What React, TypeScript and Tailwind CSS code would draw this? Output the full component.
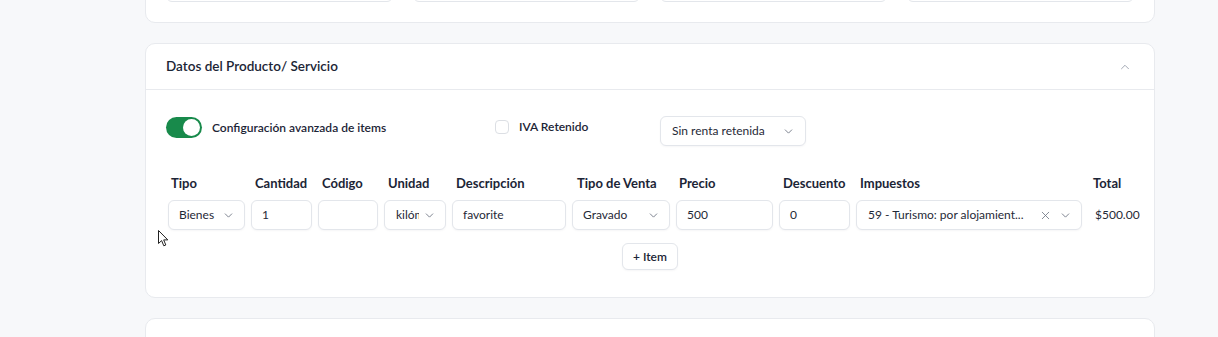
import React from 'react';
import { ChevronDown, ChevronUp, X } from 'lucide-react';

const box =
  'h-[30px] shrink-0 rounded-md border border-[#e3e6eb] bg-white shadow-[0_1px_2px_rgba(16,24,40,0.04)] flex items-center text-[12px] text-[#1f2937]';

function SelectBox({ value, className }: { value: string; className: string }) {
  return (
    <div className={`${box} pl-[10px] pr-[9px] gap-1 ${className}`}>
      <span className="flex-1 overflow-hidden whitespace-nowrap">{value}</span>
      <ChevronDown className="w-[13px] h-[13px] shrink-0 text-[#6b7280]" strokeWidth={1.6} />
    </div>
  );
}

function Field({ value, className }: { value?: string; className: string }) {
  return <div className={`${box} px-[10px] ${className}`}>{value}</div>;
}

function Cursor() {
  return (
    <svg className="absolute left-[12px] top-[186px]" width="11" height="17" viewBox="0 0 11 17">
      <path
        d="M0.5 0.5 L0.5 13.5 L3.6 10.6 L5.8 15.8 L7.8 15 L5.7 9.9 L9.8 9.9 Z"
        fill="#fff"
        stroke="#222"
        strokeWidth="1"
        strokeLinejoin="round"
      />
    </svg>
  );
}

export default function App() {
  return (
    <div className="h-[337px] overflow-hidden bg-[#f7f8fa] font-['Segoe_UI',Lato,'Liberation_Sans',sans-serif] text-[#1f2937]">
      <div className="w-[1010px] ml-[145px] flex flex-col gap-5">
        {/* previous section, mostly scrolled away */}
        <div className="-mt-[55px] rounded-[10px] border border-[#e8eaee] bg-white px-5 py-5">
          <div className="flex gap-5">
            <div className="h-9 w-[228px] rounded-md border border-[#e3e6eb]" />
            <div className="h-9 w-[228px] rounded-md border border-[#e3e6eb]" />
            <div className="h-9 w-[228px] rounded-md border border-[#e3e6eb]" />
            <div className="h-9 w-[228px] rounded-md border border-[#e3e6eb]" />
          </div>
        </div>

        <div className="relative rounded-[10px] border border-[#e8eaee] bg-white">
          <div className="h-[46px] flex items-center justify-between px-5 border-b border-[#e8eaee]">
            <span className="text-[13.5px] font-semibold text-[#1c2536]">Datos del Producto/ Servicio</span>
            <ChevronUp className="w-[14px] h-[14px] mr-[2px] text-[#9ca3af]" strokeWidth={1.6} />
          </div>

          <div className="px-5 pt-[26px] pb-[27px]">
            <div className="flex items-start h-[30px]">
              <div className="w-[329px] flex items-center gap-[10px] mt-px">
                <div className="w-[36px] h-[21px] rounded-full bg-[#188a4b] flex items-center justify-end pr-[2px]">
                  <div className="w-[17px] h-[17px] rounded-full bg-white" />
                </div>
                <span className="text-[12px] font-semibold text-[#1c2536]">Configuración avanzada de items</span>
              </div>
              <div className="w-[165px] flex items-center gap-[10px] mt-[2px]">
                <div className="w-[14px] h-[14px] rounded-[4px] border border-[#dcdfe4] bg-white" />
                <span className="text-[12px] font-semibold text-[#1c2536]">IVA Retenido</span>
              </div>
              <SelectBox value="Sin renta retenida" className="w-[146px] pl-[11px] pr-[10px]" />
            </div>

            <div className="mt-[28px] flex gap-[6px] pl-[2px] h-5 items-center text-[13px] font-bold text-[#1c2536] whitespace-nowrap">
              <div className="w-[77px] shrink-0 pl-[3px]">Tipo</div>
              <div className="w-[61px] shrink-0 pl-[4px]">Cantidad</div>
              <div className="w-[60px] shrink-0 pl-[4px]">Código</div>
              <div className="w-[62px] shrink-0 pl-[4px]">Unidad</div>
              <div className="w-[114px] shrink-0 pl-[4px]">Descripción</div>
              <div className="w-[98px] shrink-0 pl-[5px]">Tipo de Venta</div>
              <div className="w-[97px] shrink-0 pl-[3px]">Precio</div>
              <div className="w-[71px] shrink-0 pl-[4px]">Descuento</div>
              <div className="w-[226px] shrink-0 pl-[4px]">Impuestos</div>
              <div className="shrink-0 pl-[5px]">Total</div>
            </div>

            <div className="mt-[6px] flex gap-[6px] pl-[2px] items-center">
              <SelectBox value="Bienes" className="w-[77px]" />
              <Field value="1" className="w-[61px]" />
              <Field className="w-[60px]" />
              <SelectBox value="kilómetro" className="w-[62px] pl-[11px] pr-[7px]" />
              <Field value="favorite" className="w-[114px]" />
              <SelectBox value="Gravado" className="w-[98px]" />
              <Field value="500" className="w-[97px]" />
              <Field value="0" className="w-[71px]" />
              <div className={`${box} w-[226px] pl-[11px] pr-[9px]`}>
                <span className="flex-1 whitespace-nowrap">59 - Turismo: por alojamient...</span>
                <X className="w-[13px] h-[13px] text-[#6b7280] mr-[7px]" strokeWidth={1.5} />
                <ChevronDown className="w-[13px] h-[13px] text-[#6b7280]" strokeWidth={1.6} />
              </div>
              <div className="shrink-0 pl-[7px] text-[12px] text-[#1f2937] whitespace-nowrap">$500.00</div>
            </div>

            <div className="mt-[13px] flex justify-center">
              <button className="h-[27px] px-[10px] rounded-md border border-[#e3e6eb] bg-white text-[12px] font-semibold text-[#1c2536] shadow-[0_1px_2px_rgba(16,24,40,0.04)]">
                + Item
              </button>
            </div>
          </div>

          <Cursor />
        </div>

        <div className="rounded-[10px] border border-[#e8eaee] bg-white">
          <div className="h-[46px] flex items-center px-5">
            <span className="text-[13.5px] font-semibold text-[#1c2536]">Resumen</span>
          </div>
        </div>
      </div>
    </div>
  );
}
